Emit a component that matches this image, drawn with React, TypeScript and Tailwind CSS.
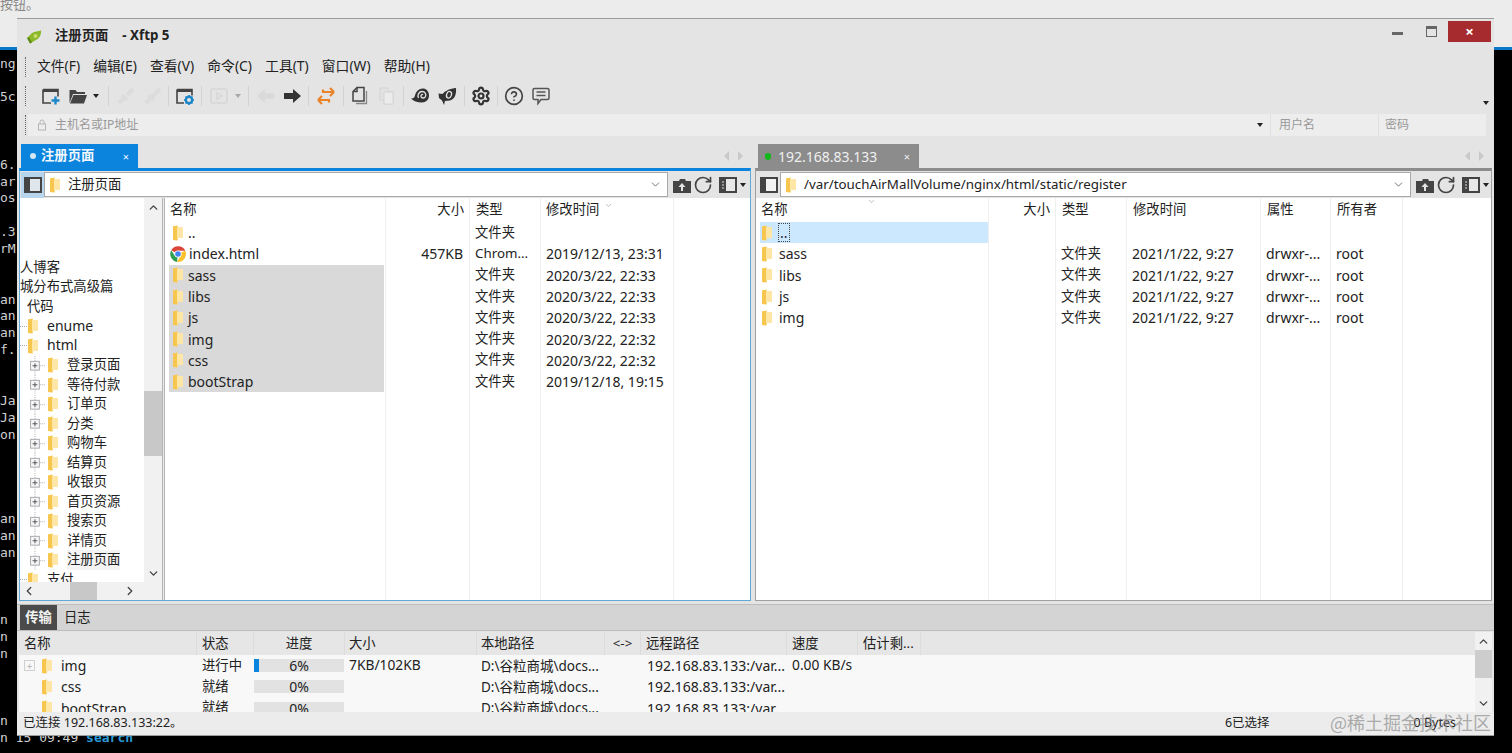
import { ChevronDown, ChevronLeft, ChevronRight, ChevronUp, CircleHelp, RotateCw, Settings } from "lucide-react";
import type { ReactNode } from "react";

const UI_FONT = "font-['Noto_Sans','Noto_Sans_CJK_SC',sans-serif]";

const TERMINAL: string[] = [
  "ng", "", "5c", "", "", "", "6.", "ar", "os", "", ".3", "rM", "", "", "an", "an", "an", "f.", "", "",
  "Ja", "Ja", "on", "", "", "", "", "an", "an", "an", "", "", "", "n", "n", "n", "", "", "", "n",
];

type Row = { name: string; size?: string; type: string; time: string; icon?: "chrome" };

const LOCAL_FILES: Row[] = [
  { name: "..", type: "文件夹", time: "" },
  { name: "index.html", size: "457KB", type: "Chrom...", time: "2019/12/13, 23:31", icon: "chrome" },
  { name: "sass", type: "文件夹", time: "2020/3/22, 22:33" },
  { name: "libs", type: "文件夹", time: "2020/3/22, 22:33" },
  { name: "js", type: "文件夹", time: "2020/3/22, 22:33" },
  { name: "img", type: "文件夹", time: "2020/3/22, 22:32" },
  { name: "css", type: "文件夹", time: "2020/3/22, 22:32" },
  { name: "bootStrap", type: "文件夹", time: "2019/12/18, 19:15" },
];

const REMOTE_NAMES = ["sass", "libs", "js", "img"];
const TREE_PAGES = ["登录页面", "等待付款", "订单页", "分类", "购物车", "结算页", "收银页", "首页资源", "搜索页", "详情页", "注册页面"];

function Folder({ className = "" }: { className?: string }) {
  return (
    <svg viewBox="0 0 12 16" className={`h-[16px] w-[12px] shrink-0 ${className}`}>
      <path d="M1 1.5 L6 0.5 L6 2 L11 2 L11 13 L6 13 L6 15.5 L1 15 Z" fill="#fbd87a" />
      <path d="M1 1.5 L5 0.8 L5 15.3 L1 15 Z" fill="#f7c64e" />
      <rect x="5" y="2" width="6" height="11" fill="#fde6a6" />
    </svg>
  );
}

function ChromeIcon() {
  return (
    <svg viewBox="0 0 16 16" className="h-[16px] w-[16px] shrink-0">
      <path d="M8 8 L1.2 4.2 A8 8 0 0 1 15.3 4.8 L8 4.8 Z" fill="#db4437" />
      <path d="M8 8 L15.3 4.8 A8 8 0 0 1 7 15.9 L10.6 9.6 Z" fill="#fbc02d" />
      <path d="M8 8 L7 15.9 A8 8 0 0 1 1.2 4.2 L4.8 9.8 Z" fill="#2e9e4f" />
      <circle cx="8" cy="8" r="3.6" fill="#fff" />
      <circle cx="8" cy="8" r="2.8" fill="#4285f4" />
    </svg>
  );
}

function Caret({ className = "" }: { className?: string }) {
  return <span className={`block h-0 w-0 shrink-0 border-x-[3px] border-t-[4px] border-x-transparent border-t-[#222] ${className}`} />;
}

function Sep({ className = "" }: { className?: string }) {
  return <span className={`block h-[20px] w-px shrink-0 bg-[#d2d2d2] ${className}`} />;
}

function ToolIcon({ children, className = "" }: { children: ReactNode; className?: string }) {
  return (
    <svg viewBox="0 0 20 20" className={`h-[20px] w-[20px] shrink-0 ${className}`}>
      {children}
    </svg>
  );
}

function Toolbar() {
  return (
    <div className="flex h-[30px] items-center">
      <span className="ml-[8px] h-[20px] border-l border-dotted border-[#666]" />
      <div className="ml-[15px] flex items-center">
        <ToolIcon>
          <path d="M2 3.5h15v7M2 3.5v13.5h8" fill="none" stroke="#444" strokeWidth="1.6" />
          <rect x="2" y="3" width="15" height="3" fill="#444" />
          <path d="M14.5 10.5v8M10.5 14.5h8" stroke="#1c86c8" strokeWidth="2.4" />
        </ToolIcon>
        <ToolIcon className="ml-[7px]">
          <path d="M1.5 4h6l1.5 2h8v2H5l-3.5 9Z" fill="#444" />
          <path d="M5.5 9H19l-3 8.5H2Z" fill="#444" />
        </ToolIcon>
        <Caret className="ml-[5px]" />
        <Sep className="ml-[9px]" />
        <ToolIcon className="ml-[7px]">
          <path d="M3 17 L8 12 M6 9 L11 14 M11 9 L17 3" stroke="#dcdcdc" strokeWidth="4" fill="none" />
        </ToolIcon>
        <ToolIcon className="ml-[7px]">
          <path d="M3 17 L7 13 M6 9 L11 14 M10 10 L17 3" stroke="#dcdcdc" strokeWidth="4" fill="none" />
        </ToolIcon>
        <Sep className="ml-[5px]" />
        <ToolIcon className="ml-[6px]">
          <path d="M2 3.5h15v6M2 3.5v13.5h7" fill="none" stroke="#444" strokeWidth="1.6" />
          <rect x="2" y="3" width="15" height="3" fill="#444" />
          <circle cx="14" cy="14" r="3.2" fill="none" stroke="#1c86c8" strokeWidth="2.4" />
          <path d="M14 9v2M14 17v2M9 14h2M17 14h2M10.5 10.5l1.4 1.4M16.1 16.1l1.4 1.4M17.5 10.5l-1.4 1.4M11.9 16.1l-1.4 1.4" stroke="#1c86c8" strokeWidth="1.6" />
        </ToolIcon>
        <Sep className="ml-[6px]" />
        <ToolIcon className="ml-[7px]">
          <rect x="2" y="3" width="16" height="14" rx="2" fill="none" stroke="#d6d6d6" strokeWidth="1.6" />
          <path d="M8 7l5 3-5 3Z" fill="none" stroke="#d6d6d6" strokeWidth="1.4" />
        </ToolIcon>
        <Caret className="ml-[6px] opacity-30" />
        <Sep className="ml-[7px]" />
        <ToolIcon className="ml-[7px]">
          <path d="M1 10 L9 3 V7 H18 V13 H9 V17 Z" fill="#dadada" />
        </ToolIcon>
        <ToolIcon className="ml-[6px]">
          <path d="M19 10 L11 3 V7 H2 V13 H11 V17 Z" fill="#333" />
        </ToolIcon>
        <Sep className="ml-[6px]" />
        <ToolIcon className="ml-[7px]">
          <path d="M18 6H7V3.5M18 6l-4-4M18 6l-4 4" fill="none" stroke="#e8832a" strokeWidth="2.2" />
          <path d="M2 14h11v2.5M2 14l4-4M2 14l4 4" fill="none" stroke="#e8832a" strokeWidth="2.2" />
        </ToolIcon>
        <Sep className="ml-[7px]" />
        <ToolIcon className="ml-[6px]">
          <path d="M7 1.5h7v13.5H3V5.500Z" fill="none" stroke="#444" strokeWidth="1.5" />
          <path d="M7 1.5v4H3" fill="none" stroke="#444" strokeWidth="1.5" />
          <path d="M16.5 5v12.5H6" fill="none" stroke="#888" strokeWidth="1.3" />
        </ToolIcon>
        <ToolIcon className="ml-[7px]">
          <path d="M3 2h8v4h5v12H7v-4H3Z" fill="#e2e2e2" stroke="#d4d4d4" />
          <path d="M7 6h9v12H7Z" fill="#ececec" stroke="#d4d4d4" />
        </ToolIcon>
        <Sep className="ml-[6px]" />
        <ToolIcon className="ml-[6px]">
          <path d="M1 12.500 C3 13 4.500 11.500 5 9.500 C6 5 9.500 2 13.500 2.500 C17 3 19 6 19 9.500 C19 13.500 16 16.500 12 16.500 C7 16.500 3.500 15 1 12.500 Z" fill="#333" />
          <path d="M8.500 12 C7 9 9 5.500 12 5.500 C15 5.500 16.500 8 15.500 10.500 C14.500 12.500 11.500 12.500 11 10.500 C10.700 9 12 8 13 8.700" fill="none" stroke="#e4e4e4" strokeWidth="1.300" />
        </ToolIcon>
        <ToolIcon className="ml-[7px]">
          <path d="M1.500 7.500 L5.500 8 C8 5 13 2.500 19 2 C19.500 8 18 13 13 14.500 L8 15 L7 19 L5 14.500 L2 12 Z" fill="#333" />
          <ellipse cx="12" cy="8.800" rx="2.400" ry="3.400" fill="none" stroke="#e4e4e4" strokeWidth="1.300" transform="rotate(20 12 8.800)" />
        </ToolIcon>
        <Sep className="ml-[7px]" />
        <Settings className="ml-[6px] h-[20px] w-[20px] text-[#333]" strokeWidth={2.6} />
        <Sep className="ml-[6px]" />
        <CircleHelp className="ml-[6px] h-[20px] w-[20px] text-[#444]" strokeWidth={2} />
        <ToolIcon className="ml-[7px]">
          <path d="M3.500 2.500h13a1.500 1.500 0 0 1 1.500 1.500v8a1.500 1.500 0 0 1-1.500 1.500H10L7 17.500v-4H3.500A1.500 1.500 0 0 1 2 12V4a1.500 1.500 0 0 1 1.500-1.500Z" fill="none" stroke="#555" strokeWidth="1.500" />
          <path d="M5.500 6h9M5.500 9.500h9" stroke="#555" strokeWidth="1.500" />
        </ToolIcon>
      </div>
      <Caret className="ml-auto mr-[5px] mt-[14px]" />
    </div>
  );
}

function NavArrows() {
  return (
    <div className="ml-auto mr-[8px] flex items-center gap-[9px] text-[#c9c9c9]">
      <span className="h-0 w-0 border-y-[5px] border-r-[5px] border-y-transparent border-r-current" />
      <span className="h-0 w-0 border-y-[5px] border-l-[5px] border-y-transparent border-l-current" />
    </div>
  );
}

function PathBar({ path, active, width, textGap }: { path: string; active: boolean; width: string; textGap: string }) {
  return (
    <div className="flex h-[27px] items-center">
      <div className={`ml-px flex h-[26px] w-[23px] shrink-0 items-center justify-center ${active ? "bg-[#b7d6ee]" : ""}`}>
        <svg viewBox="0 0 18 18" className="h-[18px] w-[18px]">
          <rect x="1" y="2" width="16" height="14" fill={active ? "#dfe6ec" : "#f2f2f2"} stroke="#444" strokeWidth="2" />
          <rect x="1" y="2" width="5" height="14" fill="#444" />
        </svg>
      </div>
      <div className={`flex h-[25px] ${width} shrink-0 items-center border border-[#a9a9a9] bg-white pl-[4px] pr-[5px]`}>
        <Folder />
        <span className={`${textGap} truncate text-[13.33px] text-[#222]`}>{path}</span>
        <ChevronDown className="ml-auto h-[13px] w-[13px] text-[#555]" strokeWidth={1.5} />
      </div>
      <svg viewBox="0 0 20 18" className="ml-[4px] h-[18px] w-[20px] shrink-0">
        <path d="M1 5h6l1-2h5l1 2h5v12H1Z" fill="#444" />
        <path d="M10 7l-3.500 4H9v4h2v-4h2.500Z" fill="#e4e4e4" />
      </svg>
      <RotateCw className="ml-[1px] h-[20px] w-[20px] text-[#444]" strokeWidth={2} />
      <svg viewBox="0 0 18 18" className="ml-[6px] h-[18px] w-[18px] shrink-0">
        <rect x="1" y="2" width="16" height="14" fill="#e8e8e8" stroke="#444" strokeWidth="2" />
        <rect x="1" y="2" width="6" height="14" fill="#444" />
        <path d="M3 6h2M3 9h2M3 12h2" stroke="#ddd" />
      </svg>
      <Caret className="ml-[3px]" />
    </div>
  );
}

function Column({ w, title, right, children, last }: { w: string; title: string; right?: boolean; children?: ReactNode; last?: boolean }) {
  return (
    <div className={`flex h-full shrink-0 flex-col ${w} ${last ? "" : "border-r border-[#efefef]"}`}>
      <div className={`flex h-[24px] shrink-0 items-center text-[13.33px] text-[#222] ${right ? "justify-end pr-[5px]" : "pl-[6px]"}`}>{title}</div>
      {children}
    </div>
  );
}

function Cell({ children, right, cjk }: { children?: ReactNode; right?: boolean; cjk?: boolean }) {
  return (
    <div className={`flex h-[21.3px] shrink-0 items-center whitespace-nowrap text-[#222] ${cjk ? "text-[13.33px]" : "text-[14px]"} ${right ? "justify-end pr-[6px]" : "pl-[5px]"}`}>
      {children}
    </div>
  );
}

function SortMark() {
  return <ChevronDown className="h-[9px] w-[11px] text-[#888]" strokeWidth={1.4} />;
}

function LocalList() {
  return (
    <div className="flex h-full min-w-0 flex-1 bg-white">
      <div className="flex h-full w-[221px] shrink-0 flex-col border-r border-[#efefef]">
        <div className="flex h-[24px] shrink-0 items-center pl-[5px] text-[13.33px] text-[#222]">名称</div>
        {LOCAL_FILES.map((f, i) => (
          <div key={f.name} className={`ml-[4px] mr-px flex h-[21.3px] shrink-0 items-center pl-[3px] text-[14px] text-[#222] ${i > 1 ? "bg-[#d9d9d9]" : ""}`}>
            {f.icon === "chrome" ? <span className="-ml-[2px] flex"><ChromeIcon /></span> : <Folder className="mr-[1px]" />}
            <span className="ml-[3px]">{f.name}</span>
          </div>
        ))}
      </div>
      <Column w="w-[84px]" title="大小" right>
        {LOCAL_FILES.map((f) => <Cell key={f.name} right>{f.size}</Cell>)}
      </Column>
      <Column w="w-[71px]" title="类型">
        {LOCAL_FILES.map((f) => <Cell key={f.name} cjk>{f.type}</Cell>)}
      </Column>
      <div className="flex h-full w-[133px] shrink-0 flex-col border-r border-[#efefef]">
        <div className="flex h-[24px] shrink-0 items-center pl-[5px] text-[13.33px] text-[#222]">
          修改时间
          <span className="ml-[4px] -mt-[10px]"><SortMark /></span>
        </div>
        {LOCAL_FILES.map((f) => <Cell key={f.name}>{f.time}</Cell>)}
      </div>
    </div>
  );
}

function RemoteList() {
  return (
    <div className="flex h-full min-w-0 flex-1 bg-white">
      <div className="flex h-full w-[233px] shrink-0 flex-col border-r border-[#efefef]">
        <div className="flex h-[24px] shrink-0 items-center pl-[5px] text-[13.33px] text-[#222]">
          名称
          <span className="ml-[78px] -mt-[17px]"><SortMark /></span>
        </div>
        <div className="ml-[4px] flex h-[21.3px] shrink-0 items-center bg-[#cce8ff] pl-[1px] text-[14px] text-[#222]">
          <Folder />
          <span className="ml-[5px] border border-dotted border-[#444] px-px leading-[17px]">..</span>
        </div>
        {REMOTE_NAMES.map((n) => (
          <div key={n} className="ml-[4px] flex h-[21.3px] shrink-0 items-center pl-[1px] text-[14px] text-[#222]">
            <Folder />
            <span className="ml-[6px]">{n}</span>
          </div>
        ))}
      </div>
      <Column w="w-[67px]" title="大小" right />
      <Column w="w-[71px]" title="类型">
        <Cell />
        {REMOTE_NAMES.map((n) => <Cell key={n} cjk>文件夹</Cell>)}
      </Column>
      <Column w="w-[134px]" title="修改时间">
        <Cell />
        {REMOTE_NAMES.map((n) => <Cell key={n}>2021/1/22, 9:27</Cell>)}
      </Column>
      <Column w="w-[70px]" title="属性">
        <Cell />
        {REMOTE_NAMES.map((n) => <Cell key={n}>drwxr-...</Cell>)}
      </Column>
      <Column w="w-[72px]" title="所有者">
        <Cell />
        {REMOTE_NAMES.map((n) => <Cell key={n}>root</Cell>)}
      </Column>
    </div>
  );
}

function TreeBranch() {
  return (
    <svg viewBox="0 0 27 20" className="h-[19.5px] w-[27px] shrink-0">
      <path d="M15 0V20" stroke="#b0b0b0" strokeDasharray="1 1" />
      <path d="M20 10H25" stroke="#b0b0b0" strokeDasharray="1 1" />
      <rect x="10.500" y="5.500" width="9" height="9" fill="#f6f6f6" stroke="#a8a8b0" />
      <path d="M12.500 10h5M15 7.500v5" stroke="#555" />
    </svg>
  );
}

function Tree() {
  return (
    <div className="flex h-full w-[142px] shrink-0 flex-col">
      <div className="flex min-h-0 flex-1">
        <div className="min-h-0 w-[124px] shrink-0 overflow-hidden whitespace-nowrap bg-white pt-[60px] text-[13.33px] text-[#222]">
          <div className="flex h-[19.5px] items-center">人博客</div>
          <div className="flex h-[19.5px] items-center">城分布式高级篇</div>
          <div className="flex h-[19.5px] items-center pl-[7px]">代码</div>
          {["enume", "html"].map((n) => (
            <div key={n} className="flex h-[19.5px] items-center text-[14px]">
              <span className="w-[7px] border-t border-dotted border-[#aaa]" />
              <Folder />
              <span className="ml-[8px] -mt-[2px]">{n}</span>
            </div>
          ))}
          {TREE_PAGES.map((n) => (
            <div key={n} className="flex h-[19.5px] items-center">
              <TreeBranch />
              <Folder />
              <span className={`ml-[8px] ${n === "注册页面" ? "bg-[#f4f4f4]" : ""}`}>{n}</span>
            </div>
          ))}
          <div className="flex h-[19.5px] items-center">
            <span className="w-[7px] border-t border-dotted border-[#aaa]" />
            <Folder />
            <span className="ml-[8px]">支付</span>
          </div>
        </div>
        <div className="flex w-[18px] shrink-0 flex-col bg-[#f1f1f1]">
          <div className="flex h-[18px] items-center justify-center"><ChevronUp className="h-[13px] w-[13px] text-[#444]" strokeWidth={2.5} /></div>
          <div className="h-[175px]" />
          <div className="h-[65px] bg-[#c8c8c8]" />
          <div className="flex-1" />
          <div className="flex h-[18px] items-center justify-center"><ChevronDown className="h-[13px] w-[13px] text-[#444]" strokeWidth={2.5} /></div>
        </div>
      </div>
      <div className="flex h-[18px] shrink-0 items-center bg-[#f1f1f1]">
        <ChevronLeft className="ml-[2px] h-[14px] w-[14px] text-[#444]" strokeWidth={2.2} />
        <span className="ml-[34px] h-full w-[27px] bg-[#c8c8c8]" />
        <ChevronRight className="ml-[26px] h-[14px] w-[14px] text-[#444]" strokeWidth={2.2} />
      </div>
    </div>
  );
}

const TRANSFERS = [
  { name: "img", status: "进行中", pct: "6%", size: "7KB/102KB", speed: "0.00 KB/s", expand: true },
  { name: "css", status: "就绪", pct: "0%", size: "", speed: "", expand: false },
  { name: "bootStrap", status: "就绪", pct: "0%", size: "", speed: "", expand: false },
];

const TH = "flex h-full shrink-0 items-center border-r border-[#dcdcdc] text-[13.33px] text-[#222]";

function TransferTable() {
  return (
    <div className="flex h-[80px] shrink-0">
      <div className="flex min-w-0 flex-1 flex-col overflow-hidden">
        <div className="flex h-[23px] shrink-0 bg-[#e6e6e6]">
          <div className={`${TH} w-[178px] pl-[5px]`}>名称</div>
          <div className={`${TH} w-[57px] pl-[5px]`}>状态</div>
          <div className={`${TH} w-[91px] justify-center`}>进度</div>
          <div className={`${TH} w-[132px] pl-[4px]`}>大小</div>
          <div className={`${TH} w-[128px] pl-[4px]`}>本地路径</div>
          <div className={`${TH} w-[36px] justify-center`}>{"<->"}</div>
          <div className={`${TH} w-[146px] pl-[5px]`}>远程路径</div>
          <div className={`${TH} w-[71px] pl-[5px]`}>速度</div>
          <div className={`${TH} w-[63px] pl-[5px]`}>估计剩...</div>
        </div>
        <div className="flex min-h-0 flex-1 flex-col overflow-hidden bg-[#f8f8f8]">
          {TRANSFERS.map((t) => (
            <div key={t.name} className="flex h-[21.3px] shrink-0 items-center whitespace-nowrap text-[13.33px] text-[#222]">
              <div className="flex w-[178px] shrink-0 items-center pl-[5px] text-[14px]">
                <span className={`flex h-[11px] w-[11px] items-center justify-center border text-[10px] leading-none text-[#bbb] ${t.expand ? "border-[#d0d0d0]" : "border-transparent text-transparent"}`}>+</span>
                <Folder className="ml-[6px]" />
                <span className="ml-[8px]">{t.name}</span>
              </div>
              <div className="w-[57px] shrink-0 pl-[5px]">{t.status}</div>
              <div className="relative flex h-[13px] w-[90px] shrink-0 items-center justify-center bg-[#e2e2e2] text-[14px]">
                {t.expand ? <span className="absolute left-0 top-0 h-full w-[5px] bg-[#0a84dc]" /> : null}
                <span className="relative">{t.pct}</span>
              </div>
              <div className="w-[133px] shrink-0 pl-[5px] text-[13.8px]">{t.size}</div>
              <div className="w-[164px] shrink-0 pl-[4px] text-[13.5px]">D:\谷粒商城\docs...</div>
              <div className="w-[146px] shrink-0 pl-[6px] text-[14px]">192.168.83.133:/var...</div>
              <div className="w-[71px] shrink-0 pl-[5px] text-[13.8px]">{t.speed}</div>
            </div>
          ))}
        </div>
      </div>
      <div className="flex w-[17px] shrink-0 flex-col bg-[#f1f1f1]">
        <div className="flex h-[18px] items-center justify-center"><ChevronUp className="h-[13px] w-[13px] text-[#444]" strokeWidth={2.5} /></div>
        <div className="h-[28px] bg-[#cdcdcd]" />
        <div className="flex-1" />
        <div className="flex h-[18px] items-center justify-center"><ChevronDown className="h-[13px] w-[13px] text-[#444]" strokeWidth={2.5} /></div>
      </div>
    </div>
  );
}

function XftpWindow() {
  return (
    <div className={`absolute left-[17px] top-[18px] flex h-[718px] w-[1477px] flex-col border-t border-b border-[#9c9c9c] bg-[#e4e4e4] ${UI_FONT}`}>
      {/* title bar */}
      <div className="flex h-[33px] shrink-0 items-start">
        <svg viewBox="0 0 16 14" className="ml-[9px] mt-[11px] h-[14px] w-[16px]">
          <path d="M1 8 L6 3 C9 1.500 12 1 15 0.500 C15.500 4 14 8 10 10 L4 13.500 Z" fill="#8cb82c" />
          <circle cx="9.500" cy="6" r="2" fill="#c9dd6a" />
          <path d="M1 8 L4 13.500 L6 12.500 L3 7Z" fill="#5f8a1a" />
        </svg>
        <span className="ml-[13px] mt-[7px] text-[13.33px] font-bold text-[#222]">注册页面</span>
        <span className="ml-[14px] mt-[7px] text-[13.33px] font-bold text-[#222]">- Xftp 5</span>
        <span className="ml-auto mt-[13px] h-[3px] w-[11px] bg-[#666]" />
        <span className="ml-[23px] mt-[7px] h-[11px] w-[11px] border border-t-[3px] border-[#666]" />
        <span className="ml-[11px] mr-[3px] mt-[2px] flex h-[21px] w-[43px] items-center justify-center bg-[#a62b2e] text-[15px] font-bold leading-none text-white">×</span>
      </div>
      {/* menu */}
      <div className="flex h-[29px] shrink-0 items-center">
        <span className="ml-[8px] h-[20px] border-l border-dotted border-[#666]" />
        <div className="ml-[11px] flex gap-[13.2px] text-[13.8px] text-[#222]">
          {["文件(F)", "编辑(E)", "查看(V)", "命令(C)", "工具(T)", "窗口(W)", "帮助(H)"].map((m) => (
            <span key={m}>{m}</span>
          ))}
        </div>
      </div>
      <Toolbar />
      {/* address bar */}
      <div className="mt-[3px] flex h-[22px] shrink-0 items-center">
        <span className="ml-[8px] h-[20px] border-l border-dotted border-[#666]" />
        <div className="ml-[2px] mr-[8px] flex h-full flex-1 items-center bg-[#ededed] text-[12px] text-[#999]">
          <svg viewBox="0 0 10 12" className="ml-[9px] h-[12px] w-[10px]">
            <path d="M3 5V3a2 2 0 0 1 4 0v2" fill="none" stroke="#b5b5b5" />
            <rect x="1.500" y="5" width="7" height="6" fill="none" stroke="#b5b5b5" />
          </svg>
          <span className="ml-[8px]">主机名或IP地址</span>
          <Caret className="ml-auto" />
          <span className="ml-[7px] h-full w-px bg-[#e0e0e0]" />
          <span className="ml-[8px] w-[99px]">用户名</span>
          <span className="h-full w-px bg-[#e0e0e0]" />
          <span className="ml-[6px] w-[101px]">密码</span>
        </div>
      </div>
      {/* panes */}
      <div className="mt-[8px] flex h-[457px] shrink-0 gap-[4px] px-[2px]">
        <div className="flex h-full w-[732px] shrink-0 flex-col">
          <div className="flex h-[24px] shrink-0 items-end pl-[2px]">
            <div className="flex h-[24px] w-[117px] items-center bg-[#0a84dc] text-[13.33px] font-bold text-[#f2f8fd]">
              <span className="ml-[9px] h-[6px] w-[6px] rounded-full bg-[#d5e6f6]" />
              <span className="ml-[5px]">注册页面</span>
              <span className="ml-auto mr-[9px] text-[11px] font-normal leading-none">×</span>
            </div>
            <div className="flex h-full flex-1 items-center"><NavArrows /></div>
          </div>
          <div className="flex min-h-0 flex-1 flex-col border-x border-b border-[#5fa9d6] border-t-[3px] border-t-[#0a84dc]">
            <PathBar path="注册页面" active width="w-[624px]" textGap="ml-[7px]" />
            <div className="flex min-h-0 flex-1 bg-white">
              <Tree />
              <div className="h-full w-[3px] shrink-0 border-x border-[#b5b5b5] bg-[#e8e8e8]" />
              <LocalList />
            </div>
          </div>
        </div>
        <div className="flex h-full w-[737px] shrink-0 flex-col">
          <div className="flex h-[24px] shrink-0 items-end pl-[3px]">
            <div className="flex h-[24px] w-[161px] items-center bg-[#8c8c8c] text-[14px] text-[#f0f0f0]">
              <span className="ml-[7px] h-[7px] w-[6px] rounded-full bg-[#12b81c]" />
              <span className="ml-[7px]">192.168.83.133</span>
              <span className="ml-auto mr-[9px] text-[11px] leading-none">×</span>
            </div>
            <div className="flex h-full flex-1 items-center"><NavArrows /></div>
          </div>
          <div className="flex min-h-0 flex-1 flex-col border-x border-b border-[#a0a0a0] border-t-[3px] border-t-[#8c8c8c]">
            <PathBar path="/var/touchAirMallVolume/nginx/html/static/register" active={false} width="w-[631px]" textGap="ml-[7px]" />
            <div className="flex min-h-0 flex-1 bg-white"><RemoteList /></div>
          </div>
        </div>
      </div>
      {/* transfer log */}
      <div className="mt-[3px] flex h-[27px] shrink-0 items-stretch border-y border-[#bdbdbd] bg-[#d4d4d4] pl-[3px] text-[13.33px] text-[#222]">
        <span className="flex w-[37px] items-center justify-center bg-[#4a4a4a] font-bold text-[#f2f2f2]">传输</span>
        <span className="ml-[7px] flex items-center">日志</span>
      </div>
      <div className="mx-[2px] mt-px"><TransferTable /></div>
      {/* status bar */}
      <div className="flex min-h-0 flex-1 items-center bg-[#ececec] pb-[1px] pl-[6px] text-[12.5px] text-[#222]">
        <span>已连接 192.168.83.133:22。</span>
        <span className="ml-auto">6已选择</span>
        <span className="ml-[144px] mr-[38px]">0 Bytes</span>
      </div>
    </div>
  );
}

export default function App() {
  return (
    <div className="relative h-[753px] w-[1512px] overflow-hidden bg-black">
      <div className="h-[47px] overflow-hidden bg-[#ececec] pl-0 font-['Noto_Sans_CJK_SC',sans-serif] text-[13px] leading-[8px] text-[#888]">
        按钮。
      </div>
      <div className="border-t-[3px] border-[#0a78c8] pt-[5.6px] font-['DejaVu_Sans_Mono',monospace] text-[13px] leading-[16.86px] text-[#cfcfcf]">
        {TERMINAL.map((line, i) => (
          <div key={i} className="h-[16.86px] whitespace-pre">{line}</div>
        ))}
        <div className="h-[16.86px] whitespace-pre">
          n 15 09:49 <span className="font-bold text-[#2a9ad6]">search</span>
        </div>
      </div>
      <XftpWindow />
      {/* site watermark */}
      <div className="absolute left-[1330px] top-[709px] font-['Noto_Sans_CJK_SC',sans-serif] text-[18px] text-[#8f8f8f] opacity-70">
        @稀土掘金技术社区
      </div>
    </div>
  );
}
